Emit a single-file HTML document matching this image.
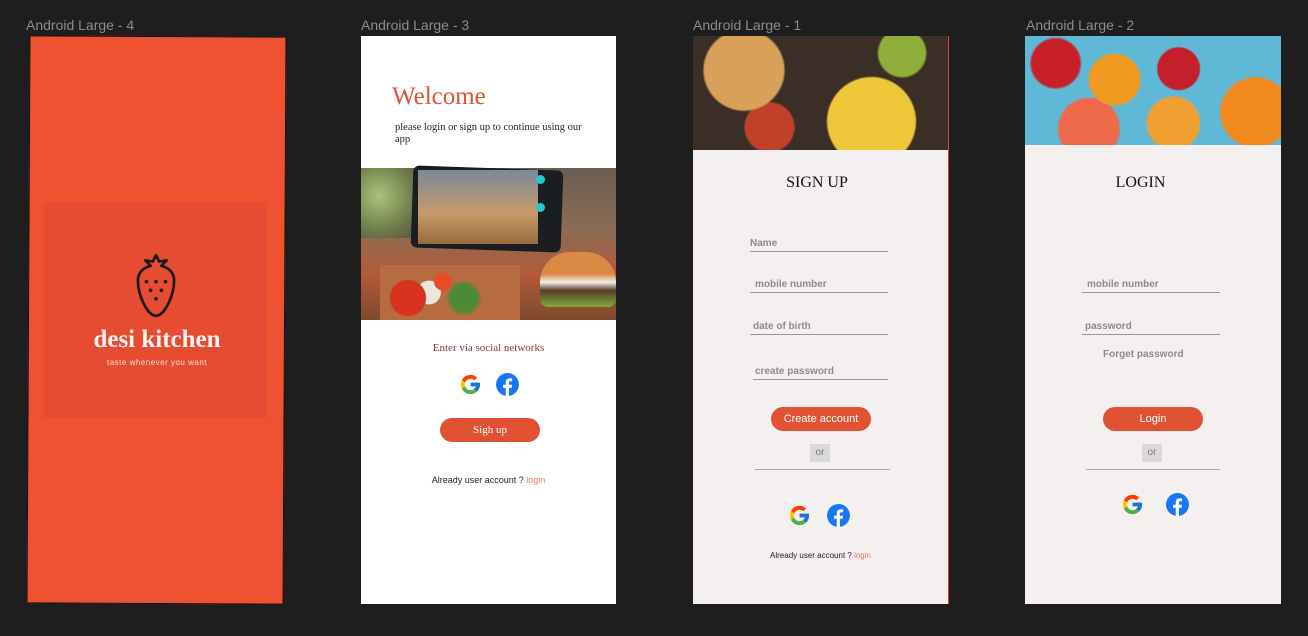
<!DOCTYPE html>
<html><head><meta charset="utf-8"><style>
*{margin:0;padding:0;box-sizing:border-box}
body{width:1308px;height:636px;background:#1e1e1e;position:relative;overflow:hidden;font-family:"Liberation Sans",sans-serif}
.a{position:absolute}
.lbl{position:absolute;top:17px;font-size:14px;color:#8c8c8c}
.ser{font-family:"Liberation Serif",serif}
.field{position:absolute;font-size:10px;font-weight:bold;color:#8f8a8a;border-bottom:1px solid #9a9696;padding-bottom:2px}
.btn{position:absolute;background:#e05232;color:#fff;border-radius:12px;text-align:center;font-size:11px}
.or{position:absolute;width:20px;height:18px;background:#dcdad9;color:#777;font-size:10px;text-align:center;line-height:18px}
</style></head><body>
<svg width="0" height="0" style="position:absolute"><defs>
<symbol id="g" viewBox="0 0 48 48"><path fill="#FFC107" d="M43.6 20H24v8h11.3C33.7 33 29.3 36 24 36c-6.6 0-12-5.4-12-12s5.4-12 12-12c3 0 5.8 1.1 7.9 3l5.7-5.7C34 6 29.3 4 24 4 13 4 4 13 4 24s9 20 20 20 20-9 20-20c0-1.3-.1-2.7-.4-4z"/><path fill="#FF3D00" d="M6.3 14.7l6.6 4.8C14.7 15.1 19 12 24 12c3 0 5.8 1.1 7.9 3l5.7-5.7C34 6 29.3 4 24 4 16.3 4 9.700 8.3 6.3 14.7z"/><path fill="#4CAF50" d="M24 44c5.2 0 9.9-2 13.4-5.2l-6.2-5.2C29.2 35.1 26.7 36 24 36c-5.2 0-9.6-3.300-11.3-8l-6.5 5C9.5 39.6 16.2 44 24 44z"/><path fill="#1976D2" d="M43.6 20H24v8h11.3c-.8 2.2-2.2 4.2-4.1 5.6l6.2 5.2C37 39.2 44 34 44 24c0-1.3-.1-2.7-.4-4z"/></symbol>
<symbol id="f" viewBox="0 0 48 48"><circle cx="24" cy="24" r="22" fill="#1877F2"/><path fill="#fff" d="M26.7 46V30.5h5.2l.8-6h-6v-3.9c0-1.7.5-2.9 3-2.9h3.2v-5.4c-.6-.1-2.5-.2-4.6-.2-4.6 0-7.7 2.8-7.7 7.9v4.5h-5.2v6h5.2V46z"/></symbol>
</defs></svg>

<div class="lbl" style="left:26px">Android Large - 4</div>
<div class="lbl" style="left:361px">Android Large - 3</div>
<div class="lbl" style="left:693px">Android Large - 1</div>
<div class="lbl" style="left:1026px">Android Large - 2</div>

<!-- Frame 4 -->
<div class="a" style="left:28px;top:36px;width:257px;height:568px;background:#ee5230;transform:rotate(0.3deg);border:1px solid #111"></div>
<div class="a" style="left:44px;top:202px;width:223px;height:216px;background:#e54c32"></div>
<svg class="a" style="left:131px;top:253px" width="50" height="66" viewBox="0 0 46 62"><path d="M23 2l3 6 7-1-5 5c7 2 12 6 12 14 0 14-9 33-17 33S6 40 6 26c0-8 5-12 12-14l-5-5 7 1z" fill="none" stroke="#1a1a1a" stroke-width="2.5" stroke-linejoin="round"/><g fill="#1a1a1a"><circle cx="14" cy="27" r="1.7"/><circle cx="23" cy="27" r="1.7"/><circle cx="32" cy="27" r="1.7"/><circle cx="18" cy="35" r="1.7"/><circle cx="28" cy="35" r="1.7"/><circle cx="23" cy="43" r="1.7"/></g></svg>
<div class="a ser" style="left:72px;top:326px;width:170px;text-align:center;font-size:25px;font-weight:bold;color:#f6f0ef">desi kitchen</div>
<div class="a" style="left:72px;top:358px;width:170px;text-align:center;font-size:8px;color:#f3dcd5;letter-spacing:.5px">taste whenever you want</div>

<!-- Frame 3 -->
<div class="a" style="left:361px;top:36px;width:255px;height:568px;background:#fff"></div>
<div class="a ser" style="left:392px;top:83px;font-size:25px;color:#e05232">Welcome</div>
<div class="a ser" style="left:395px;top:122px;width:195px;font-size:10.5px;line-height:12px;color:#222">please login or sign up to continue using our app</div>
<div class="a" style="left:361px;top:168px;width:255px;height:152px;background:linear-gradient(180deg,#6b5d52 0%,#8a6d55 40%,#b35a3a 70%,#7d4a2e 100%)"></div>
<div class="a" style="left:361px;top:168px;width:60px;height:70px;background:radial-gradient(circle at 30% 40%,#a9c27a,#6d7a4a 60%,#5a4a3a)"></div>
<div class="a" style="left:412px;top:168px;width:150px;height:82px;background:#1b1d22;border-radius:6px;transform:rotate(2deg)"></div>
<div class="a" style="left:418px;top:170px;width:120px;height:74px;background:linear-gradient(#7a8a99,#c79a6a 60%,#9a6a3a)"></div>
<div class="a" style="left:536px;top:175px;width:9px;height:9px;border-radius:50%;background:#25c9d6"></div>
<div class="a" style="left:536px;top:203px;width:9px;height:9px;border-radius:50%;background:#25c9d6"></div>
<div class="a" style="left:540px;top:252px;width:76px;height:55px;border-radius:30px 30px 8px 8px;background:linear-gradient(#d98a45 40%,#f1efe8 55%,#5a3a28 70%,#7cae3c)"></div>
<div class="a" style="left:380px;top:265px;width:140px;height:55px;background:radial-gradient(circle at 20% 60%,#d8321e 15%,transparent 16%),radial-gradient(circle at 45% 30%,#e84a2a 10%,transparent 11%),radial-gradient(circle at 60% 60%,#4d8a36 15%,transparent 20%),radial-gradient(circle at 35% 50%,#ece7dc 12%,transparent 13%),#b76b40"></div>
<div class="a ser" style="left:361px;top:342px;width:255px;text-align:center;font-size:11px;color:#8a3535">Enter via social networks</div>
<svg class="a" style="left:459px;top:373px" width="23" height="23"><use href="#g"/></svg>
<svg class="a" style="left:495px;top:372px" width="25" height="25"><use href="#f"/></svg>
<div class="btn ser" style="left:440px;top:418px;width:100px;height:24px;line-height:24px">Sigh up</div>
<div class="a" style="left:361px;top:475px;width:255px;text-align:center;font-size:9px;color:#222">Already user account ? <span style="color:#f0795c">login</span></div>

<!-- Frame 1 -->
<div class="a" style="left:693px;top:36px;width:256px;height:568px;background:#f4f0ef;border-right:1px solid #d8452a"></div>
<div class="a" style="left:693px;top:36px;width:255px;height:114px;background:radial-gradient(circle at 20% 30%,#d9a05a 18%,transparent 19%),radial-gradient(circle at 70% 75%,#eec63a 22%,transparent 23%),radial-gradient(circle at 82% 15%,#8fae3a 10%,transparent 11%),radial-gradient(circle at 30% 80%,#c0402a 12%,transparent 13%),#3a2e26"></div>
<div class="a ser" style="left:693px;top:174px;width:248px;text-align:center;font-size:16px;color:#111">SIGN UP</div>
<div class="field" style="left:750px;top:238px;width:138px">Name</div>
<div class="field" style="left:750px;top:279px;width:138px;padding-left:5px">mobile number</div>
<div class="field" style="left:750px;top:321px;width:138px;padding-left:3px">date of birth</div>
<div class="field" style="left:753px;top:366px;width:135px;padding-left:2px">create password</div>
<div class="btn" style="left:771px;top:407px;width:100px;height:24px;line-height:24px">Create account</div>
<div class="or" style="left:810px;top:444px">or</div>
<div class="a" style="left:755px;top:469px;width:135px;border-top:1px solid #aaa"></div>
<svg class="a" style="left:788px;top:504px" width="23" height="23"><use href="#g"/></svg>
<svg class="a" style="left:826px;top:503px" width="25" height="25"><use href="#f"/></svg>
<div class="a" style="left:693px;top:551px;width:255px;text-align:center;font-size:8px;color:#222">Already user account ? <span style="color:#f0795c">login</span></div>

<!-- Frame 2 -->
<div class="a" style="left:1025px;top:36px;width:256px;height:568px;background:#f4f0ef"></div>
<div class="a" style="left:1025px;top:36px;width:256px;height:109px;background:radial-gradient(circle at 12% 25%,#c8202a 10%,transparent 11%),radial-gradient(circle at 35% 40%,#f19a20 14%,transparent 15%),radial-gradient(circle at 60% 30%,#c3202c 12%,transparent 13%),radial-gradient(circle at 25% 85%,#ee6a4a 14%,transparent 15%),radial-gradient(circle at 58% 80%,#f0a030 15%,transparent 16%),radial-gradient(circle at 90% 70%,#f08a20 14%,transparent 15%),#5fb8d6"></div>
<div class="a ser" style="left:1025px;top:174px;width:231px;text-align:center;font-size:16px;color:#111">LOGIN</div>
<div class="field" style="left:1082px;top:279px;width:138px;padding-left:5px">mobile number</div>
<div class="field" style="left:1082px;top:321px;width:138px;padding-left:3px">password</div>
<div class="a" style="left:1103px;top:349px;font-size:10px;font-weight:bold;color:#8f8a8a">Forget password</div>
<div class="btn" style="left:1103px;top:407px;width:100px;height:24px;line-height:24px">Login</div>
<div class="or" style="left:1142px;top:444px">or</div>
<div class="a" style="left:1086px;top:469px;width:134px;border-top:1px solid #aaa"></div>
<svg class="a" style="left:1121px;top:493px" width="23" height="23"><use href="#g"/></svg>
<svg class="a" style="left:1165px;top:492px" width="25" height="25"><use href="#f"/></svg>
</body></html>
